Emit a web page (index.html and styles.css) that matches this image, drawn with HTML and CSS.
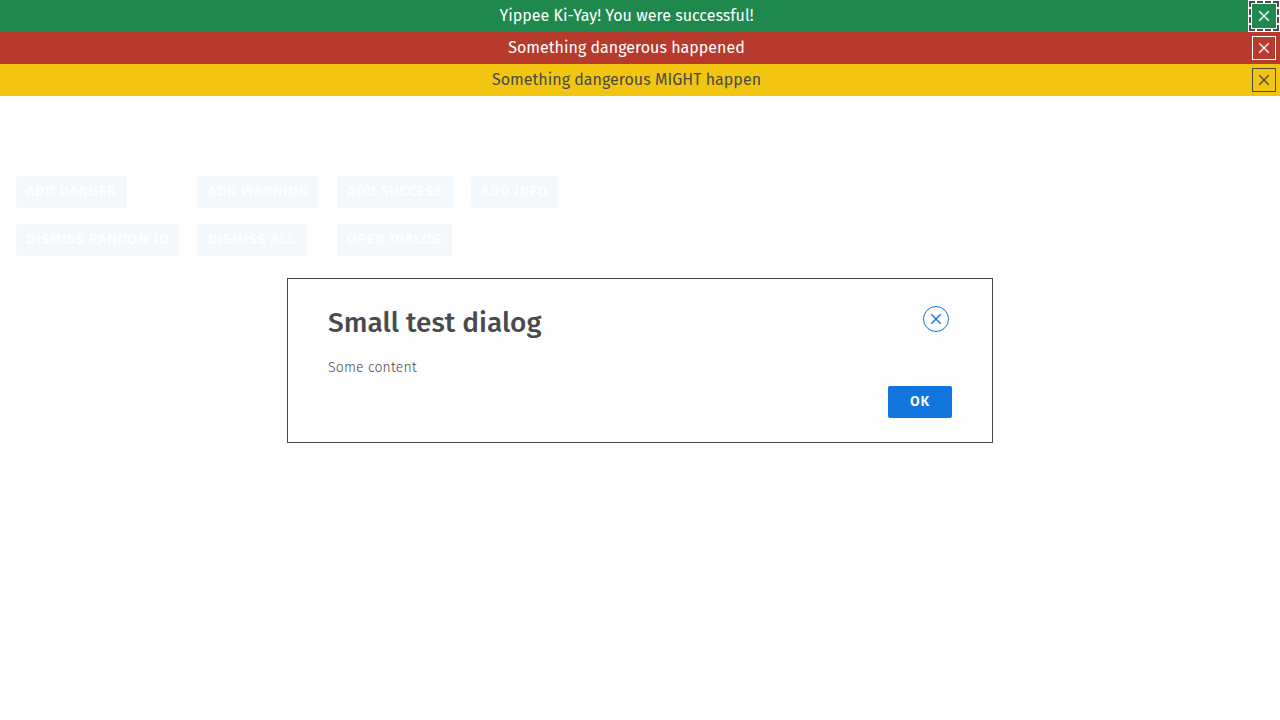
FILE: index.html
```html
<!DOCTYPE html>
<html lang="en">
<head>
<meta charset="utf-8">
<title>Notifications</title>
<link rel="stylesheet" href="styles.css">
</head>
<body>
<div class="banners">
  <div class="banner success"><span class="message">Yippee Ki-Yay! You were successful!</span><button class="dismiss focused" aria-label="Close"><svg viewBox="0 0 24 24"><path d="M7.2 7.2l9.6 9.6M16.8 7.2l-9.6 9.6"/></svg></button></div>
  <div class="banner danger"><span class="message">Something dangerous happened</span><button class="dismiss" aria-label="Close"><svg viewBox="0 0 24 24"><path d="M7.2 7.2l9.6 9.6M16.8 7.2l-9.6 9.6"/></svg></button></div>
  <div class="banner warning"><span class="message">Something dangerous MIGHT happen</span><button class="dismiss" aria-label="Close"><svg viewBox="0 0 24 24"><path d="M7.2 7.2l9.6 9.6M16.8 7.2l-9.6 9.6"/></svg></button></div>
</div>
<main class="actions">
  <button class="btn">ADD DANGER</button>
  <button class="btn">ADD WARNING</button>
  <button class="btn">ADD SUCCESS</button>
  <button class="btn">ADD INFO</button>
  <button class="btn">DISMISS RANDOM ID</button>
  <button class="btn">DISMISS ALL</button>
  <button class="btn">OPEN DIALOG</button>
</main>
<section class="dialog" role="dialog" aria-labelledby="title">
  <header class="dialog-head">
    <h1 class="title" id="title">Small test dialog</h1>
    <button class="close" aria-label="Close"><svg viewBox="0 0 26 26"><circle cx="13" cy="13" r="12.5"/><path d="M8.3 8.3l9.4 9.4M17.7 8.3l-9.4 9.4"/></svg></button>
  </header>
  <p class="content">Some content</p>
  <footer class="dialog-foot"><button class="ok">OK</button></footer>
</section>
</body>
</html>
```
FILE: styles.css
```css
* { box-sizing: border-box; }
body {
  margin: 0;
  height: 720px;
  overflow: hidden;
  background: #fefefe;
  color: #4a4a4a;
  font-family: "Fira Sans", "Noto Sans", sans-serif;
}
button { margin: 0; padding: 0; border: 0; font-family: inherit; }
svg { display: block; fill: none; stroke: currentColor; }
.banner {
  display: flex;
  align-items: center;
  height: 32px;
  padding: 0 4px 0 1px;
  color: #fefefe;
}
.success { background: #1f894d; }
.danger { background: #b73b2d; }
.warning { background: #f2c511; color: #4a4a4a; }
.message {
  flex: 1;
  text-align: center;
  font-size: 16px;
  line-height: 32px;
  letter-spacing: 0.02px;
  white-space: nowrap;
}
.dismiss {
  width: 24px;
  height: 24px;
  border: 1px solid currentColor;
  background: transparent;
  color: inherit;
}
.dismiss svg { width: 24px; height: 24px; margin: -1px; stroke-width: 1.4; }
.focused {
  border-color: transparent;
  background: #1f894d;
  box-shadow: 0 0 0 4px #fefefe;
  outline: 2px dashed #4a4a4a;
  outline-offset: 1px;
}
.actions {
  display: grid;
  grid-template-columns: 182px 139px 134px 87px;
  grid-auto-rows: 32px;
  row-gap: 16px;
  padding: 80px 16px 0;
}
.btn {
  justify-self: start;
  padding: 0 10px 1px;
  border-radius: 2px;
  background: #f3f8fd;
  color: #fefefe;
  font-size: 14px;
  font-weight: 600;
  line-height: 31px;
  letter-spacing: 0.93px;
  white-space: nowrap;
}
.dialog {
  width: 706px;
  height: 165px;
  margin: 22px auto 0;
  padding: 24px 40px;
  border: 1px solid #4a4a4a;
  background: #fefefe;
}
.dialog-head { display: flex; justify-content: space-between; height: 48px; }
.title { margin: 0; font-size: 28px; font-weight: 500; line-height: 40px; }
.close {
  width: 26px;
  height: 26px;
  margin: 3px 3px 0 0;
  background: none;
  color: #1175dd;
}
.close svg { width: 26px; height: 26px; }
.close circle { stroke-width: 1; }
.close path { stroke-width: 1.4; }
.content { margin: 7px 0 0; font-size: 14px; font-weight: 300; line-height: 20px; letter-spacing: 0.2px; }
.dialog-foot { display: flex; justify-content: flex-end; margin-top: 8px; }
.ok {
  width: 64px;
  height: 32px;
  padding: 0 0 1px;
  border-radius: 2px;
  background: #1175dd;
  color: #fefefe;
  font-size: 14px;
  font-weight: 600;
  line-height: 31px;
  letter-spacing: 0.93px;
}
```
